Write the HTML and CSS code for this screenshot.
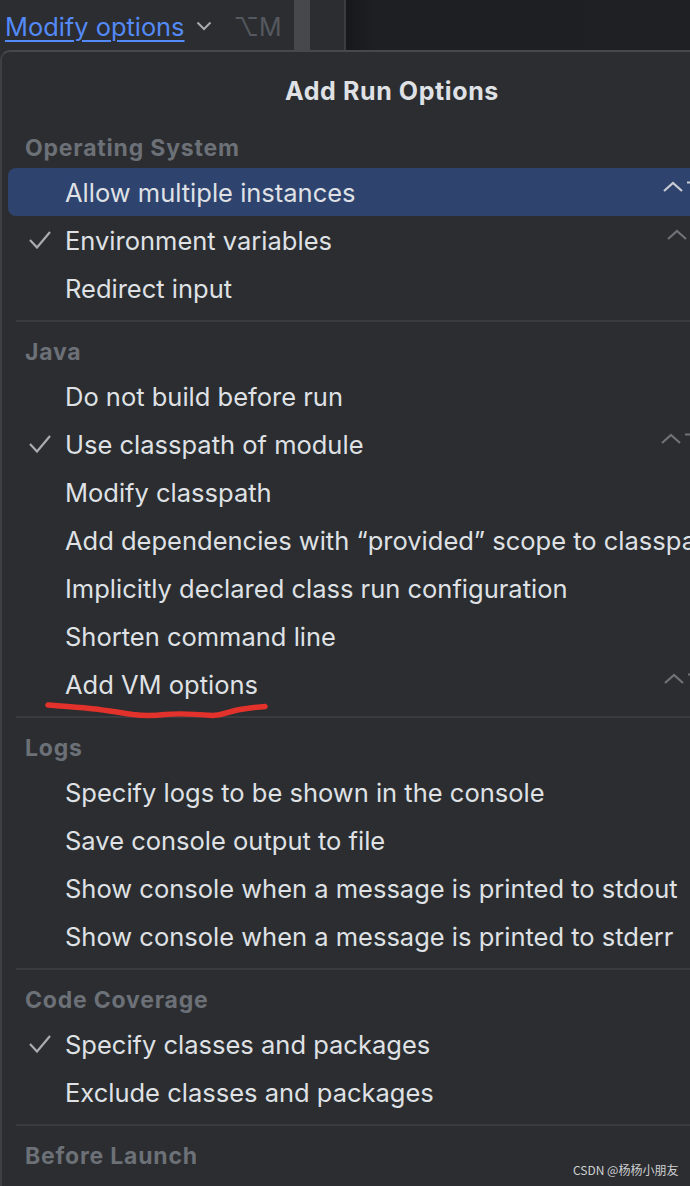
FILE: index.html
```html
<!DOCTYPE html>
<html>
<head>
<meta charset="utf-8">
<link rel="stylesheet" href="styles.css">
</head>
<body>
<div class="page">
  <div class="topbar">
    <div class="top-left">
      <a class="modify">Modify options</a>
      <svg class="caret" width="16" height="10" viewBox="0 0 16 10"><path d="M1.5 1.5 L8 8 L14.5 1.5" fill="none" stroke="#a8abb0" stroke-width="2"/></svg>
      <span class="hotkey">⌥M</span>
    </div>
    <div class="strip"></div>
    <div class="panel"></div>
    <div class="panel-line"></div>
    <div class="editor"></div>
  </div>

  <div class="popup">
    <div class="title">Add Run Options</div>

    <div class="header">Operating System</div>
    <div class="row selected"><span class="check"></span><span class="label">Allow multiple instances</span><span class="sc"><svg width="40" height="20" viewBox="0 0 40 20"><path d="M2 11 L11 3 L20 11 M25 2.5 H40" fill="none" stroke="#c9ccd3" stroke-width="2.2"/></svg></span></div>
    <div class="row"><span class="check"><svg width="22" height="18" viewBox="0 0 22 18"><path d="M1 9 L8 16.5 L21 1" fill="none" stroke="#a9acb2" stroke-width="2.2"/></svg></span><span class="label">Environment variables</span><span class="sc sc-r4"><svg width="40" height="20" viewBox="0 0 40 20"><path d="M2 11 L11 3 L20 11 M25 2.5 H40" fill="none" stroke="#6f7278" stroke-width="2.2"/></svg></span></div>
    <div class="row"><span class="check"></span><span class="label">Redirect input</span></div>
    <div class="sep"></div>

    <div class="header">Java</div>
    <div class="row"><span class="check"></span><span class="label">Do not build before run</span></div>
    <div class="row"><span class="check"><svg width="22" height="18" viewBox="0 0 22 18"><path d="M1 9 L8 16.5 L21 1" fill="none" stroke="#a9acb2" stroke-width="2.2"/></svg></span><span class="label">Use classpath of module</span><span class="sc sc-l2"><svg width="40" height="20" viewBox="0 0 40 20"><path d="M2 11 L11 3 L20 11 M25 2.5 H40" fill="none" stroke="#6f7278" stroke-width="2.2"/></svg></span></div>
    <div class="row"><span class="check"></span><span class="label">Modify classpath</span></div>
    <div class="row"><span class="check"></span><span class="label">Add dependencies with “provided” scope to classpath</span></div>
    <div class="row"><span class="check"></span><span class="label">Implicitly declared class run configuration</span></div>
    <div class="row"><span class="check"></span><span class="label">Shorten command line</span></div>
    <div class="row"><span class="check"></span><span class="label">Add VM options</span><span class="sc sc-r1"><svg width="40" height="20" viewBox="0 0 40 20"><path d="M2 11 L11 3 L20 11 M25 2.5 H40" fill="none" stroke="#6f7278" stroke-width="2.2"/></svg></span></div>
    <div class="sep"></div>

    <div class="header">Logs</div>
    <div class="row"><span class="check"></span><span class="label">Specify logs to be shown in the console</span></div>
    <div class="row"><span class="check"></span><span class="label">Save console output to file</span></div>
    <div class="row"><span class="check"></span><span class="label">Show console when a message is printed to stdout</span></div>
    <div class="row"><span class="check"></span><span class="label">Show console when a message is printed to stderr</span></div>
    <div class="sep"></div>

    <div class="header">Code Coverage</div>
    <div class="row"><span class="check"><svg width="22" height="18" viewBox="0 0 22 18"><path d="M1 9 L8 16.5 L21 1" fill="none" stroke="#a9acb2" stroke-width="2.2"/></svg></span><span class="label">Specify classes and packages</span></div>
    <div class="row"><span class="check"></span><span class="label">Exclude classes and packages</span></div>
    <div class="sep"></div>

    <div class="header">Before Launch</div>
  </div>

  <svg class="scribble" width="690" height="1186" viewBox="0 0 690 1186"><path d="M48 705 C60 706 70 707 80 707.5 C95 708.5 110 711 133 714.5 C145 716 152 716 165 714.5 C180 713 195 714 213 715.5 C225 715 230 711 240 709.5 C250 708 258 707 265 706.5" fill="none" stroke="#e2322b" stroke-width="5.5" stroke-linecap="round"/></svg>

  <div class="watermark">CSDN @杨杨小朋友</div>
</div>
</body>
</html>
```
FILE: styles.css
```css
html, body {
  margin: 0;
  padding: 0;
  background: #2b2d30;
}
body {
  width: 690px;
  height: 1186px;
  overflow: hidden;
  font-family: Inter, "Noto Sans", "Noto Sans CJK SC", sans-serif;
  color: #dfe1e5;
}
.page {
  position: relative;
  width: 690px;
  height: 1186px;
  overflow: hidden;
}
.topbar {
  display: flex;
  height: 50px;
}
.top-left {
  width: 294px;
  display: flex;
  align-items: center;
  background: #2b2d30;
}
.modify {
  margin-left: 5px;
  font-size: 25.4px;
  color: #548af7;
  text-decoration: underline;
  text-decoration-thickness: 2px;
  text-underline-offset: 4px;
  line-height: 30px;
  margin-top: 4px;
}
.caret {
  margin-left: 11px;
  margin-top: 2px;
}
.hotkey {
  margin-left: 22px;
  font-size: 25px;
  color: #55585e;
  margin-top: 4px;
}
.strip {
  width: 16px;
  background: #46484c;
}
.panel {
  width: 34px;
  background: #2b2d30;
}
.panel-line {
  width: 2px;
  background: #3b3d41;
}
.editor {
  flex: 1;
  background: linear-gradient(90deg, #17181a 0%, #1e1f22 8%, #1f2023 100%);
}
.popup {
  width: 780px;
  margin-left: 0;
  border-top: 2px solid #46484c;
  border-left: 2px solid #3d3f43;
  border-top-left-radius: 10px;
  background: #2b2d30;
  padding-bottom: 40px;
}
.title {
  padding: 19px 0 17px;
  line-height: 40px;
  font-size: 25px;
  letter-spacing: 0.6px;
  font-weight: 700;
  text-align: center;
  color: #dfe1e5;
}
.header {
  height: 40px;
  line-height: 40px;
  padding-left: 23px;
  font-size: 23px;
  letter-spacing: 0.8px;
  font-weight: 700;
  color: #6c7077;
}
.row {
  display: grid;
  grid-template-columns: 57px 597px 60px;
  align-items: center;
  height: 48px;
  margin: 0 0 0 6px;
  border-radius: 8px 0 0 8px;
  font-size: 25.5px;
  white-space: nowrap;
}
.row.selected {
  background: #2e436e;
}
.check {
  display: flex;
  align-items: center;
  padding-left: 21px;
  height: 18px;
}
.label {
  overflow: visible;
}
.sc {
  display: flex;
  align-items: center;
  height: 20px;
  margin-top: -4px;
}
.sc-r4 { margin-left: 4px; }
.sc-l2 { margin-left: -2px; }
.sc-r1 { margin-left: 1px; }
.sep {
  height: 2px;
  background: #393b40;
  margin: 8px 0 10px 14px;
}
.scribble {
  position: absolute;
  left: 0;
  top: 0;
  pointer-events: none;
}
.watermark {
  position: absolute;
  left: 573px;
  top: 1162px;
  font-size: 12px;
  color: #cfd0d2;
  font-family: "Noto Sans CJK SC", "Noto Sans", sans-serif;
  line-height: 16px;
}
```
